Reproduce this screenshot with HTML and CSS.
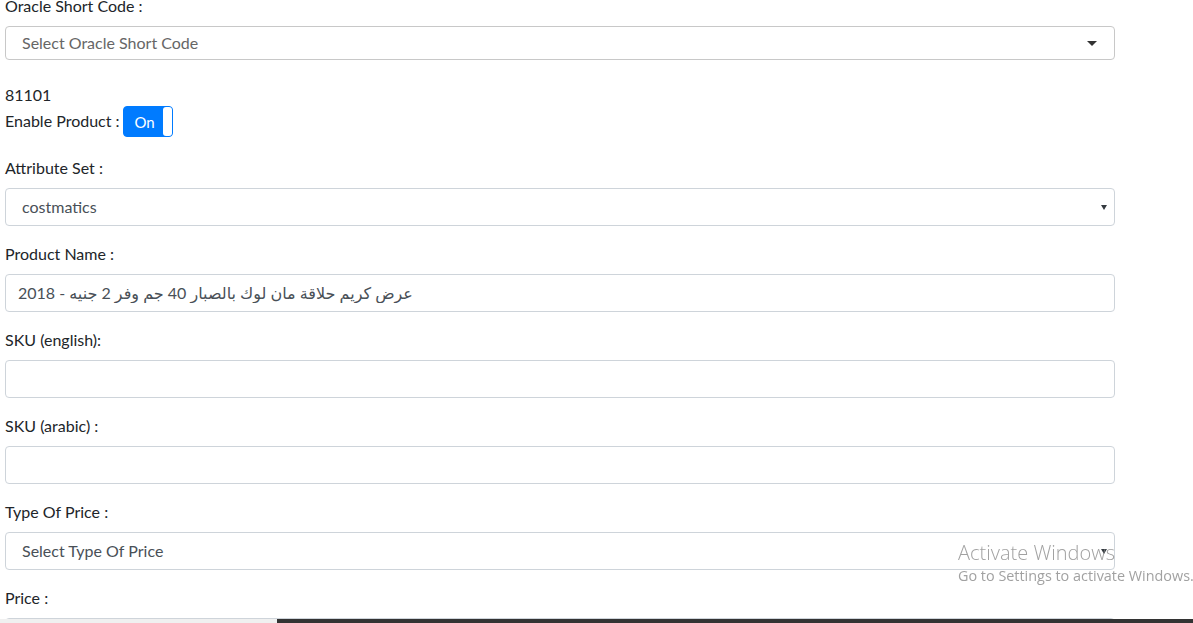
FILE: index.html
```html
<!DOCTYPE html>
<html lang="en">
<head>
<meta charset="utf-8">
<title>Product</title>
<link rel="stylesheet" href="styles.css">
</head>
<body>
<div class="page">
  <div class="group group-oracle">
    <label class="lbl">Oracle Short Code :</label>
    <div class="s2">
      <span class="s2-text">Select Oracle Short Code</span>
      <svg class="s2-arrow" width="10" height="5" viewBox="0 0 10 5"><polygon points="0,0 10,0 5,5" fill="#333"/></svg>
    </div>
  </div>
  <div class="code">81101</div>
  <div class="enable-row">
    <span class="lbl-inline">Enable Product :</span>
    <span class="toggle"><span class="toggle-on">On</span><span class="toggle-handle"></span></span>
  </div>
  <div class="group">
    <label class="lbl">Attribute Set :</label>
    <div class="csel">
      <span class="csel-text">costmatics</span>
      <svg class="csel-arrow" width="6" height="5" viewBox="0 0 6 5"><polygon points="0,0 6,0 3,5" fill="#343a40"/></svg>
    </div>
  </div>
  <div class="group">
    <label class="lbl">Product Name :</label>
    <input class="fc" type="text" value="عرض كريم حلاقة مان لوك بالصبار 40 جم وفر 2 جنيه - 2018">
  </div>
  <div class="group">
    <label class="lbl">SKU (english):</label>
    <input class="fc" type="text" value="">
  </div>
  <div class="group">
    <label class="lbl">SKU (arabic) :</label>
    <input class="fc" type="text" value="">
  </div>
  <div class="group">
    <label class="lbl">Type Of Price :</label>
    <div class="csel">
      <span class="csel-text">Select Type Of Price</span>
      <svg class="csel-arrow" width="6" height="5" viewBox="0 0 6 5"><polygon points="0,0 6,0 3,5" fill="#343a40"/></svg>
    </div>
  </div>
  <div class="group">
    <label class="lbl">Price :</label>
    <input class="fc" type="text" value="">
  </div>
</div>
<div class="watermark">
  <div class="wm-title">Activate Windows</div>
  <div class="wm-sub">Go to Settings to activate Windows.</div>
</div>
<div class="bottom-bar"><span class="bb-light"></span><span class="bb-dark"></span></div>
</body>
</html>
```
FILE: styles.css
```css
html, body {
  margin: 0;
  padding: 0;
  background: #fff;
  overflow: hidden;
}
body {
  font-family: "Lato", "Open Sans", "DejaVu Sans", sans-serif;
  font-size: 16px;
  line-height: 24px;
  color: #212529;
}
.page {
  width: 1110px;
  margin-left: 5px;
  margin-top: -6px;
}
.group {
  margin-bottom: 16px;
}
.group-oracle {
  margin-bottom: 23px;
}
.lbl {
  display: block;
  margin-bottom: 8px;
}
.s2 {
  box-sizing: border-box;
  height: 34px;
  border: 1px solid #c8c8c8;
  border-radius: 4px;
  display: flex;
  align-items: center;
  justify-content: space-between;
  padding: 0 17px 0 16px;
}
.s2-text {
  color: #666;
}
.code {
  line-height: 24px;
}
.enable-row {
  display: flex;
  align-items: center;
  height: 31px;
  margin-top: -1px;
  margin-bottom: 19px;
}
.lbl-inline {
  margin-right: 3px;
  position: relative;
  top: -1px;
}
.toggle {
  box-sizing: border-box;
  width: 50px;
  height: 31px;
  background: #007bff;
  border: 1px solid #007bff;
  border-radius: 4px;
  display: flex;
  align-items: stretch;
}
.toggle-on {
  flex: 1;
  color: #fff;
  font-size: 15px;
  display: flex;
  align-items: center;
  justify-content: center;
  padding-left: 3px;
}
.toggle-handle {
  width: 9px;
  background: #fff;
  border-radius: 3px;
}
.csel {
  box-sizing: border-box;
  height: 38px;
  border: 1px solid #ced4da;
  border-radius: 4px;
  display: flex;
  align-items: center;
  justify-content: space-between;
  padding: 0 7px 0 16px;
}
.csel-text {
  color: #495057;
}
.fc {
  display: block;
  box-sizing: border-box;
  width: 100%;
  height: 38px;
  border: 1px solid #ced4da;
  border-radius: 4px;
  padding: 6px 12px;
  font-family: "Lato", "DejaVu Sans", sans-serif;
  font-size: 16px;
  color: #495057;
  background: #fff;
  outline: none;
  margin: 0;
}
.watermark {
  position: fixed;
  left: 958px;
  top: 541px;
  color: rgba(130, 130, 130, 0.75);
  font-family: "Open Sans", "Lato", sans-serif;
  white-space: nowrap;
}
.wm-title {
  font-size: 20px;
  line-height: 24px;
  font-weight: 300;
}
.wm-sub {
  font-size: 14.4px;
  line-height: 20px;
  margin-top: 1px;
}
.bottom-bar {
  position: fixed;
  left: 0;
  right: 0;
  bottom: 0;
  height: 4px;
  display: flex;
}
.bb-light {
  width: 277px;
  background: #f0f0f0;
}
.bb-dark {
  flex: 1;
  background: #333;
}
```
